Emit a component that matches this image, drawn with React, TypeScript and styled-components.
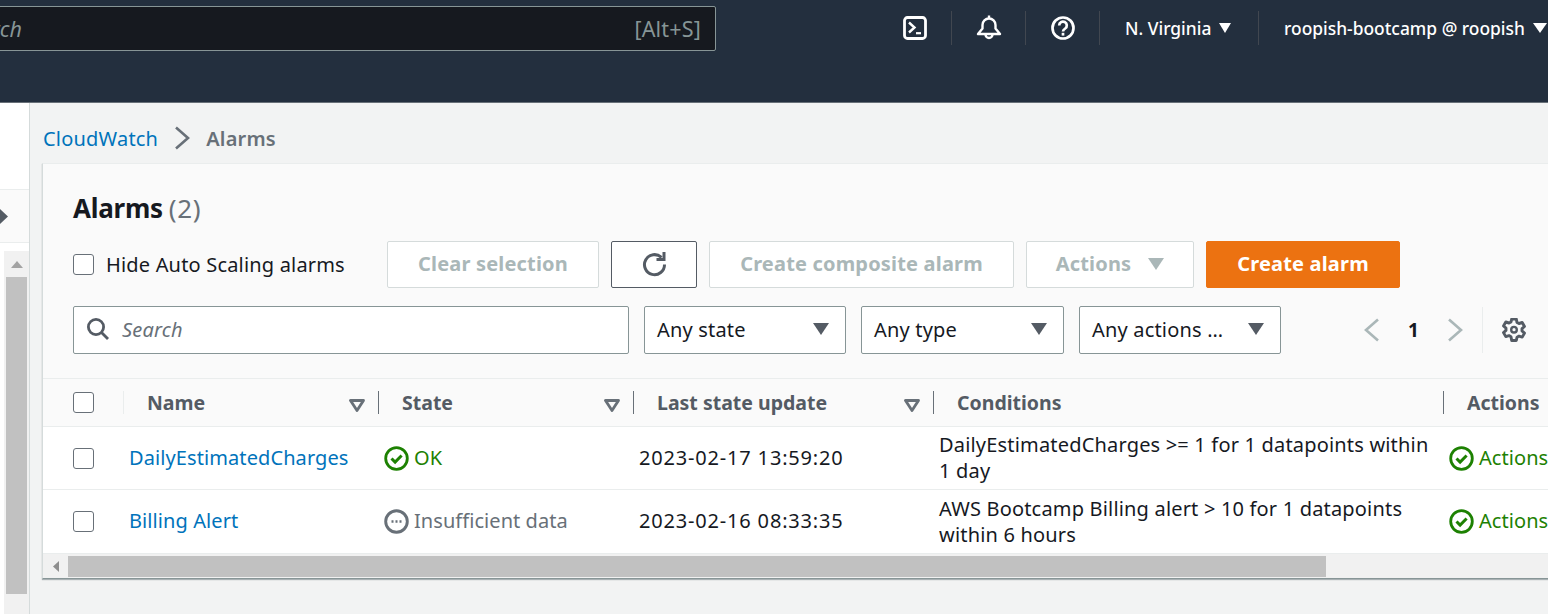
import React from "react";
import styled, { createGlobalStyle } from "styled-components";

const Global = createGlobalStyle`
  html, body { margin: 0; padding: 0; background: #f2f3f3; }
  body { font-family: "Noto Sans", "Open Sans", sans-serif; font-size: 20px; letter-spacing: 0.18px; color: #16191f; overflow: hidden; }
  * { box-sizing: border-box; }
`;

const Page = styled.div`
  width: 1548px; height: 614px; overflow: hidden;
  display: flex; flex-direction: column;
`;

/* ---------- top bar ---------- */
const TopBar = styled.header`
  height: 103px; flex: none;
  background: #232f3e; border-bottom: 1px solid #687078;
  display: flex; justify-content: space-between; align-items: flex-start;
  padding-top: 6px; color: #fff;
`;
const GlobalSearch = styled.div`
  width: 720px; height: 45px; margin-left: -4px; flex: none;
  background: #16191f; border: 1px solid #879596; border-radius: 2px;
  display: flex; justify-content: space-between; align-items: center;
  padding: 0 14px 0 0; overflow: hidden;
  font-size: 21.5px; color: #879596;
`;
const SearchHint = styled.span`
  font-style: italic; margin-left: -40px;
`;
const Tools = styled.div`
  display: flex; align-items: center; height: 44px; margin-right: -4px;
`;
const ToolCell = styled.div<{ $w: number }>`
  width: ${(p) => p.$w}px; height: 34px;
  display: flex; align-items: center; justify-content: center;
  border-right: 1px solid #414750;
  &:last-child { border-right: none; }
`;
const MenuCell = styled(ToolCell)`
  justify-content: flex-start; padding-left: 25px; gap: 8px;
  font-size: 17.4px; font-weight: 500; white-space: nowrap; letter-spacing: 0;
`;

/* ---------- body ---------- */
const Body = styled.div`
  flex: 1; display: flex; min-height: 0;
`;
const SideRail = styled.aside`
  width: 30px; flex: none; background: #fff;
  border-right: 1px solid #d5dbdb;
  display: flex; flex-direction: column;
`;
const RailSpacer = styled.div`
  height: 87px; flex: none; border-bottom: 1px solid #eaeded;
`;
const RailToggle = styled.div`
  height: 53px; flex: none; border-bottom: 1px solid #eaeded; background: #fafafa;
  display: flex; align-items: center;
`;
const RailScroll = styled.div`
  flex: 1; margin: 8px 0 0 4px; background: #f1f1f1;
  display: flex; flex-direction: column; align-items: center;
`;
const RailThumb = styled.div`
  width: 21px; height: 317px; background: #c1c1c1; margin-top: 9px;
`;
const Main = styled.main`
  flex: 1; min-width: 0; background: #f2f3f3; padding: 0 0 0 12px;
  display: flex; flex-direction: column;
`;
const Crumbs = styled.nav`
  height: 60px; flex: none; display: flex; align-items: center; gap: 16px;
  padding: 10px 0 0 1px; font-size: 20px; letter-spacing: 0.2px;
`;
const CrumbLink = styled.a`
  color: #0073bb;
`;
const CrumbCurrent = styled.span`
  color: #687078; font-weight: 600;
`;
const Card = styled.section`
  width: 1560px; flex: none; background: #fafafa;
  border-top: 1px solid #eaeded; border-left: 1px solid #d5dbdb; border-bottom: 1px solid #879596;
  box-shadow: 0 1px 1px rgba(0,28,36,.3);
  display: flex; flex-direction: column;
`;
const CardHead = styled.div`
  padding: 25px 0 24px 30px; display: flex; flex-direction: column;
  border-bottom: 1px solid #eaeded;
`;
const Title = styled.h1`
  margin: 0; font-size: 26px; line-height: 38px; font-weight: 700; letter-spacing: -0.25px;
  display: flex; gap: 6px;
`;
const Count = styled.span`
  font-weight: 400; color: #687078; letter-spacing: 0.6px;
`;
const ActionRow = styled.div`
  display: flex; align-items: center; margin-top: 14px; height: 47px;
`;
const CheckLabel = styled.label`
  display: flex; align-items: center; gap: 12px; width: 314px; flex: none; white-space: nowrap;
`;
const Box = styled.span`
  display: block; width: 21px; height: 21px; flex: none; background: #fff;
  border: 1px solid #687078; border-radius: 3px;
`;
const ButtonGroup = styled.div`
  display: flex; gap: 12px;
`;
const Btn = styled.button<{ $w: number; $variant?: "disabled" | "icon" | "primary" }>`
  width: ${(p) => p.$w}px; height: 47px; border-radius: 2px; padding: 0 0 2px;
  font: 700 20px "Noto Sans", sans-serif; letter-spacing: 0.18px;
  display: flex; align-items: center; justify-content: center; gap: 17px;
  background: ${(p) => (p.$variant === "primary" ? "#ec7211" : "#fff")};
  color: ${(p) => (p.$variant === "primary" ? "#fff" : "#aab7b8")};
  border: 1px solid ${(p) =>
    p.$variant === "primary" ? "#ec7211" : p.$variant === "icon" ? "#545b64" : "#d5dbdb"};
`;
const FilterRow = styled.div`
  display: flex; align-items: center; margin-top: 18px; height: 48px;
`;
const SearchField = styled.div`
  width: 556px; height: 48px; flex: none; background: #fff;
  border: 1px solid #879596; border-radius: 2px;
  display: flex; align-items: center; gap: 12px; padding: 0 0 2px 12px;
  font-style: italic; color: #687078;
`;
const Selects = styled.div`
  display: flex; gap: 15px; margin-left: 15px;
`;
const Select = styled.div<{ $w: number }>`
  width: ${(p) => p.$w}px; height: 48px; background: #fff;
  border: 1px solid #879596; border-radius: 2px;
  display: flex; align-items: center; justify-content: space-between;
  padding: 0 16px 2px 12px; white-space: nowrap;
`;
const Pager = styled.div`
  display: flex; align-items: center; margin-left: 83px; height: 48px;
`;
const PageNum = styled.span`
  width: 67px; text-align: center; font-weight: 700; font-size: 19px;
`;
const PagerDivider = styled.span`
  width: 1px; height: 46px; background: #eaeded; margin: 0 19px 0 19px;
`;

/* ---------- table ---------- */
const columns = "81px 255px 255px 300px 510px 160px";
const HeadRow = styled.div`
  display: grid; grid-template-columns: ${columns}; height: 48px; align-items: center;
  border-bottom: 1px solid #eaeded; color: #545b64; font-weight: 700;
  font-size: 19.5px; letter-spacing: 0;
`;
const HeadCheck = styled.div`
  padding-left: 30px; height: 23px; display: flex; align-items: center;
  border-right: 1px solid #eaeded;
`;
const HeadCell = styled.div<{ $divider?: boolean }>`
  height: 23px; padding: 0 13px 0 23px; white-space: nowrap;
  display: flex; align-items: center; justify-content: space-between; line-height: 23px;
  border-right: 1px solid ${(p) => (p.$divider ? "#687078" : "transparent")};
`;
const Row = styled.div<{ $h: number }>`
  display: grid; grid-template-columns: ${columns}; height: ${(p) => p.$h}px; align-items: center;
  background: #fff; border-bottom: 1px solid #eaeded;
  &:last-of-type { border-bottom: none; }
`;
const RowCheck = styled.div`
  padding-left: 30px;
`;
const DateCell = styled.div`
  padding: 0 0 2px 5px; white-space: nowrap; letter-spacing: 0.82px;
`;
const LinkCell = styled.a`
  display: block; padding: 0 0 2px 5px; color: #0073bb; white-space: nowrap; letter-spacing: 0.09px;
`;
const CondCell = styled.div`
  padding: 0 8px 0 5px; line-height: 26px; color: #16191f;
`;
const Status = styled.div<{ $tone: "ok" | "muted" }>`
  display: flex; align-items: center; gap: 5px; padding-left: 5px; white-space: nowrap; letter-spacing: 0.06px;
  color: ${(p) => (p.$tone === "ok" ? "#1d8102" : "#687078")};
`;
const StatusText = styled.span`
  padding-bottom: 2px;
`;

/* ---------- table scrollbar ---------- */
const HScroll = styled.div`
  height: 24px; background: #f1f1f1; display: flex; align-items: center; padding-top: 1px;
`;
const HArrow = styled.div`
  width: 25px; flex: none; display: flex; justify-content: center;
`;
const HThumb = styled.div`
  width: 1258px; height: 21px; background: #c1c1c1;
`;

/* ---------- icons ---------- */
const Caret = ({ c = "#fff", w = 12, h = 10 }: { c?: string; w?: number; h?: number }) => (
  <svg width={w} height={h} viewBox="0 0 12 10" preserveAspectRatio="none" style={{ flex: "none" }}>
    <path d="M0 0h12L6 10z" fill={c} />
  </svg>
);
const Terminal = () => (
  <svg width="24" height="24" viewBox="0 0 24 24" fill="none" stroke="#fff" strokeWidth="2.8">
    <rect x="1.5" y="1.5" width="21" height="21" rx="3" />
    <path d="M6 6.500l5.500 5-5.500 5" strokeWidth="2.400" />
    <path d="M13 17.200h5" strokeWidth="2.200" />
  </svg>
);
const Bell = () => (
  <svg width="26" height="26" viewBox="0 0 26 26" fill="none" stroke="#fff" strokeWidth="2.400" strokeLinejoin="round">
    <path d="M2 19h22l-4.500-5.500V10a6.500 6.500 0 0 0-13 0v3.500z" />
    <path d="M13 3.500V.500" />
    <path d="M9.500 19.500a3.500 3.500 0 0 0 7 0" />
  </svg>
);
const Help = () => (
  <svg width="24" height="24" viewBox="0 0 24 24" fill="none" stroke="#fff" strokeWidth="2.700">
    <circle cx="12" cy="12" r="10.500" />
    <path d="M8.200 9.400a3.800 3.800 0 1 1 6 3.100c-1.500 1-2.200 1.500-2.200 3" />
    <path d="M12 16.800v2.800" />
  </svg>
);
const Refresh = () => (
  <svg width="26" height="26" viewBox="0 0 26 26" fill="none" stroke="#545b64" strokeWidth="3">
    <path d="M20.500 6.500A10 10 0 1 0 23.500 13.500" />
    <path d="M23 1v7.500h-7.500" strokeLinejoin="miter" />
  </svg>
);
const Magnifier = () => (
  <svg width="24" height="24" viewBox="0 0 24 24" fill="none" stroke="#545b64" strokeWidth="2.800">
    <circle cx="10" cy="10" r="7.600" />
    <path d="M15.500 15.500L22 22" />
  </svg>
);
const Chevron = ({ flip }: { flip?: boolean }) => (
  <svg width="16" height="24" viewBox="0 0 16 24" fill="none" stroke="#aab7b8" strokeWidth="2.600"
    style={flip ? { transform: "scaleX(-1)" } : undefined}>
    <path d="M14 1.500L2 12l12 10.500" />
  </svg>
);
const Crumb = () => (
  <svg width="16" height="24" viewBox="0 0 16 24" fill="none" stroke="#687078" strokeWidth="2.600">
    <path d="M2 1.500L14 12 2 22.500" />
  </svg>
);
const Gear = () => (
  <svg width="24" height="24" viewBox="0 0 24 24" fill="none" stroke="#545b64" strokeWidth="2.900" strokeLinejoin="round">
    <path d="M9.700 1.500h4.600l.7 3.300 2 1.100 3.200-1 2.300 4-2.500 2.200v2.200l2.500 2.200-2.300 4-3.200-1-2 1.100-.7 3.300H9.700L9 19.100l-2-1.100-3.200 1-2.300-4L4 12.800v-2.200L1.500 8.400l2.300-4 3.200 1 2-1.100z" transform="translate(0 -.4)" />
    <circle cx="12" cy="11.700" r="2.800" strokeWidth="2.400" />
  </svg>
);
const SortDown = () => (
  <svg width="16" height="13" viewBox="0 0 16 13" style={{ flex: "none", marginTop: 6 }}>
    <path d="M1.500 1.500h13L8 11.500z" fill="none" stroke="#687078" strokeWidth="2.800" strokeLinejoin="round" />
  </svg>
);
const OkIcon = () => (
  <svg width="25" height="25" viewBox="0 0 25 25" fill="none" stroke="#1d8102" style={{ flex: "none" }}>
    <circle cx="12.500" cy="12.500" r="10.800" strokeWidth="2.800" />
    <path d="M7.500 12.500l3.600 3.600 6.500-6.600" strokeWidth="3" />
  </svg>
);
const PendingIcon = () => (
  <svg width="25" height="25" viewBox="0 0 25 25" fill="none" stroke="#687078" style={{ flex: "none" }}>
    <circle cx="12.500" cy="12.500" r="10.800" strokeWidth="2.900" />
    <path d="M7.500 12.500h2M11.500 12.500h2M15.500 12.500h2" strokeWidth="2.400" />
  </svg>
);
const RailArrow = () => (
  <svg width="8" height="15" viewBox="0 0 8 15" style={{ flex: "none" }}>
    <path d="M0 0l8 7.500L0 15z" fill="#545b64" />
  </svg>
);
const UpArrow = () => (
  <svg width="12" height="7" viewBox="0 0 12 7" style={{ marginTop: 10, flex: "none" }}>
    <path d="M0 7l6-7 6 7z" fill="#a3a3a3" />
  </svg>
);
const LeftArrow = () => (
  <svg width="6" height="11" viewBox="0 0 6 11">
    <path d="M6 0L0 5.500 6 11z" fill="#8e8e8e" />
  </svg>
);

export default function App() {
  return (
    <Page>
      <Global />
      <TopBar>
        <GlobalSearch>
          <SearchHint>Search</SearchHint>
          <span>[Alt+S]</span>
        </GlobalSearch>
        <Tools>
          <ToolCell $w={74}><Terminal /></ToolCell>
          <ToolCell $w={74}><Bell /></ToolCell>
          <ToolCell $w={74}><Help /></ToolCell>
          <MenuCell $w={159}>N. Virginia <Caret /></MenuCell>
          <MenuCell $w={293}>roopish-bootcamp @ roopish <Caret c="#fff" w={14} h={10} /></MenuCell>
        </Tools>
      </TopBar>
      <Body>
        <SideRail>
          <RailSpacer />
          <RailToggle><RailArrow /></RailToggle>
          <RailScroll>
            <UpArrow />
            <RailThumb />
          </RailScroll>
        </SideRail>
        <Main>
          <Crumbs>
            <CrumbLink>CloudWatch</CrumbLink>
            <Crumb />
            <CrumbCurrent>Alarms</CrumbCurrent>
          </Crumbs>
          <Card>
            <CardHead>
              <Title>Alarms <Count>(2)</Count></Title>
              <ActionRow>
                <CheckLabel><Box />Hide Auto Scaling alarms</CheckLabel>
                <ButtonGroup>
                  <Btn $w={212} $variant="disabled">Clear selection</Btn>
                  <Btn $w={86} $variant="icon"><Refresh /></Btn>
                  <Btn $w={305} $variant="disabled">Create composite alarm</Btn>
                  <Btn $w={168} $variant="disabled">Actions <Caret c="#aab7b8" w={16} h={12} /></Btn>
                  <Btn $w={194} $variant="primary">Create alarm</Btn>
                </ButtonGroup>
              </ActionRow>
              <FilterRow>
                <SearchField><Magnifier />Search</SearchField>
                <Selects>
                  <Select $w={202}>Any state <Caret c="#545b64" w={16} h={12} /></Select>
                  <Select $w={203}>Any type <Caret c="#545b64" w={16} h={12} /></Select>
                  <Select $w={202}>Any actions … <Caret c="#545b64" w={16} h={12} /></Select>
                </Selects>
                <Pager>
                  <Chevron />
                  <PageNum>1</PageNum>
                  <Chevron flip />
                  <PagerDivider />
                  <Gear />
                </Pager>
              </FilterRow>
            </CardHead>
            <HeadRow>
              <HeadCheck><Box /></HeadCheck>
              <HeadCell $divider>Name <SortDown /></HeadCell>
              <HeadCell $divider>State <SortDown /></HeadCell>
              <HeadCell $divider>Last state update <SortDown /></HeadCell>
              <HeadCell $divider>Conditions</HeadCell>
              <HeadCell>Actions</HeadCell>
            </HeadRow>
            <Row $h={63}>
              <RowCheck><Box /></RowCheck>
              <LinkCell>DailyEstimatedCharges</LinkCell>
              <Status $tone="ok"><OkIcon /><StatusText>OK</StatusText></Status>
              <DateCell>2023-02-17 13:59:20</DateCell>
              <CondCell>DailyEstimatedCharges &gt;= 1 for 1 datapoints within 1 day</CondCell>
              <Status $tone="ok"><OkIcon /><StatusText>Actions enabled</StatusText></Status>
            </Row>
            <Row $h={64}>
              <RowCheck><Box /></RowCheck>
              <LinkCell>Billing Alert</LinkCell>
              <Status $tone="muted"><PendingIcon /><StatusText>Insufficient data</StatusText></Status>
              <DateCell>2023-02-16 08:33:35</DateCell>
              <CondCell>AWS Bootcamp Billing alert &gt; 10 for 1 datapoints within 6 hours</CondCell>
              <Status $tone="ok"><OkIcon /><StatusText>Actions enabled</StatusText></Status>
            </Row>
            <HScroll>
              <HArrow><LeftArrow /></HArrow>
              <HThumb />
            </HScroll>
          </Card>
        </Main>
      </Body>
    </Page>
  );
}
